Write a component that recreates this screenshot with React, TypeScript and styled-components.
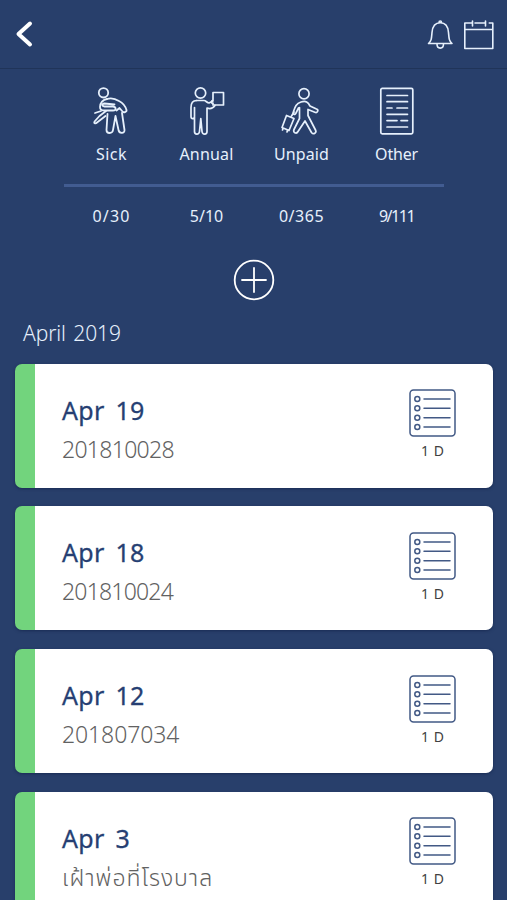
import React from "react";
import styled, { createGlobalStyle } from "styled-components";

const GlobalStyle = createGlobalStyle`
  * { box-sizing: border-box; }
  body { margin: 0; background: #283f6b; overflow: hidden; }
`;

const Screen = styled.main`
  width: 507px;
  height: 900px;
  overflow: hidden;
  background: #283f6b;
  color: #e6f0fc;
  font-family: "Noto Sans", "Noto Sans Thai", sans-serif;
`;

const Header = styled.header`
  display: flex;
  align-items: center;
  height: 69px;
  padding: 0 12px 0 14px;
  border-bottom: 1px solid #203459;
`;

const IconButton = styled.button<{ $push?: boolean }>`
  display: flex;
  padding: 0;
  border: 0;
  background: none;
  color: inherit;
  margin-right: ${(p) => (p.$push ? "auto" : "0")};
`;

const Line = styled.svg<{ $weight?: number }>`
  display: block;
  fill: none;
  stroke: currentColor;
  stroke-width: ${(p) => p.$weight ?? 1.6};
  stroke-linecap: round;
  stroke-linejoin: round;
`;

const Summary = styled.section`
  display: grid;
  grid-template-columns: repeat(4, 95px);
  width: 380px;
  height: 118px;
  margin: 0 auto 0 64px;
  padding-top: 17px;
  border-bottom: 3px solid #425c91;
`;

const LeaveType = styled.div`
  display: flex;
  flex-direction: column;
  align-items: center;
`;

const Label = styled.span<{ $spacing: number }>`
  margin-top: 6px;
  font-size: 16px;
  line-height: 24px;
  white-space: nowrap;
  letter-spacing: ${(p) => p.$spacing}px;
`;

const Totals = styled.section`
  display: grid;
  grid-template-columns: repeat(4, 95px);
  width: 380px;
  height: 69px;
  margin-left: 64px;
  padding-top: 17px;
`;

const Total = styled.span<{ $spacing: number }>`
  text-align: center;
  font-size: 16px;
  line-height: 24px;
  letter-spacing: ${(p) => p.$spacing}px;
`;

const AddRow = styled.div`
  display: flex;
  justify-content: center;
  height: 48px;
`;

const Month = styled.h2`
  margin: 0;
  height: 59.7px;
  padding: 14px 0 0 23px;
  font-size: 21px;
  font-weight: 300;
  line-height: 30px;
  letter-spacing: -0.1px;
  word-spacing: 2px;
`;

const Cards = styled.div`
  display: flex;
  flex-direction: column;
  gap: 18.7px;
  padding: 0 14px 0 15px;
`;

const Card = styled.article`
  display: flex;
  flex-shrink: 0;
  justify-content: space-between;
  height: 124px;
  padding: 0 37px 0 27px;
  border-left: 20px solid #72d47d;
  border-radius: 7px;
  background: #fff;
  box-shadow: 0 1px 3px rgba(15, 29, 65, 0.55);
`;

const Details = styled.div`
  padding-top: 29px;
`;

const DateText = styled.h3`
  margin: 0;
  color: #263f73;
  font-size: 25px;
  font-weight: 400;
  line-height: 34px;
  letter-spacing: 0.3px;
  white-space: nowrap;
  word-spacing: 4px;
  -webkit-text-stroke: 0.3px currentColor;
`;

const Note = styled.p<{ $spacing: number }>`
  margin: 5px 0 0;
  color: #626262;
  font-size: 23px;
  font-weight: 300;
  line-height: 34px;
  white-space: nowrap;
  letter-spacing: ${(p) => p.$spacing}px;
`;

const Duration = styled.div`
  display: flex;
  flex-direction: column;
  align-items: center;
  padding-top: 25.5px;
  color: #414141;
  font-size: 14px;
  line-height: 20px;
  word-spacing: 1px;
`;

const ListIcon = styled(Line)`
  color: #425985;
  margin-bottom: 4px;
`;

const SickIcon = () => (
  <Line width="50" height="50" viewBox="-7 0 50 50" $weight={1.8}>
    <circle cx="9.500" cy="6.800" r="4.700" />
    <path d="M13 13c-4 .5-7 4-7 8 0 2.500 1.500 3.500 4 3.500h9c3.500 0 3.500-3.500 0-4h-8.500c-2.500 0-3-2.500 0-3l10 1" />
    <path d="M13 13c4-1.500 8-.5 12 2 4 2 6.500 5.500 7.500 9 .5 2-3 3-4 1.500l-3-3.500-3 2.500" />
    <path d="M7 25 1 27M12 25l-6.500 5L1 35c-2 2.500.5 3 2 1.500l8.500-6.500" />
    <path d="M13.500 28 12.500 44c0 4 6 4 6.500 0l2.500-14 3 14c.7 4 6.500 3.500 6 0l-2.500-17" />
  </Line>
);

const AnnualIcon = () => (
  <Line width="50" height="50" viewBox="0 0 50 50" $weight={1.7}>
    <circle cx="18.500" cy="7" r="5.200" />
    <path d="M14.500 14.500c-4 0-5.500 3-5.500 7v9c0 2.800 3.500 2.800 3.500 0v-9M12.500 31v14.500c0 3.500 4.500 3.500 5 0l1.300-13 1.200 13c.5 3.500 5 3.500 5 0V22c4 1.500 6 .3 8-2.500" />
    <path d="M14.500 14.500h7.500c2 0 3 2.500 5 2.500l4-2" />
    <path d="M31 13.500V6.500h10.500V19H31v-2M31 14c-2 1-2 3 0 4" />
  </Line>
);

const UnpaidIcon = () => (
  <Line width="50" height="50" viewBox="-5 0 50 50" $weight={1.7}>
    <circle cx="22" cy="7.800" r="5.100" />
    <path d="M19 16c-5 1.500-6 5-7.500 9.500-1 3 1.500 4 2.500 1.500l2.500-5M19 16c5-1.500 7 0 9 4l6.500 3c2.500 1 1 4-1 3.500L26 23.500v6l7.500 14.500c1.500 3-2 5-4 2.500L23 35 16 45.500c-1.500 3-5.500 1-4-2l5.500-11V21.500" />
    <path d="m4.500 29.500 7.500 3-5 12-7-3zM9.500 30l2.500-4M1 42.500l-.5 1.500M5.500 44.500l-.5 1.500" />
  </Line>
);

const OtherIcon = () => (
  <Line width="50" height="50" viewBox="0 0 50 50" $weight={1.7}>
    <rect x="8.800" y="2.300" width="32" height="45.500" rx="1.500" />
    <path d="M15 9.500h20.500M15 15.700h20.500M15 22h5M25 22h10.500M15 28.300h20.500M15 34.600h10M29 34.600h6.500M15 41h20.500" />
  </Line>
);

const leaveTypes = [
  { label: "Sick", icon: <SickIcon />, spacing: 0.5 },
  { label: "Annual", icon: <AnnualIcon />, spacing: 0.2 },
  { label: "Unpaid", icon: <UnpaidIcon />, spacing: 0.1 },
  { label: "Other", icon: <OtherIcon />, spacing: -0.2 },
];

const totals = [
  { value: "0/30", spacing: 1.1 },
  { value: "5/10", spacing: 0 },
  { value: "0/365", spacing: 0.5 },
  { value: "9/111", spacing: -1.5 },
];

const entries = [
  { date: "Apr 19", note: "201810028", spacing: -0.7 },
  { date: "Apr 18", note: "201810024", spacing: -0.8 },
  { date: "Apr 12", note: "201807034", spacing: -0.1 },
  { date: "Apr 3", note: "เฝ้าพ่อที่โรงบาล", spacing: 1 },
];

export default function App() {
  return (
    <Screen>
      <GlobalStyle />
      <Header>
        <IconButton $push aria-label="Back">
          <Line width="22" height="30" viewBox="0 0 22 30" $weight={4} color="#fff">
            <path d="M16 4.500 4.500 15 16 25.500" />
          </Line>
        </IconButton>
        <IconButton aria-label="Notifications">
          <Line width="36" height="34" viewBox="4 0 36 34" $weight={1.6}>
            <path d="M6.500 26.500h23.500c-3-2.500-3-5-3.500-11C26 9.500 23 5.800 18.300 5.800S10.500 9.500 10 15.500c-.5 6-.5 8.500-3.500 11zM15 27c0 5.500 6.500 5.500 6.500 0M17 5.500c0-2 2.500-2 2.500 0" />
          </Line>
        </IconButton>
        <IconButton aria-label="Calendar">
          <Line width="33" height="34" viewBox="0 0 33 34" $weight={1.600}>
            <path d="M9.500 6H2.800v25.500h28V6h-3.500M13 6h9.500M2.800 12.500h28M10.500 4v5M23.500 4v5" />
          </Line>
        </IconButton>
      </Header>
      <Summary>
        {leaveTypes.map((t) => (
          <LeaveType key={t.label}>
            {t.icon}
            <Label $spacing={t.spacing}>{t.label}</Label>
          </LeaveType>
        ))}
      </Summary>
      <Totals>
        {totals.map((t) => (
          <Total key={t.value} $spacing={t.spacing}>{t.value}</Total>
        ))}
      </Totals>
      <AddRow>
        <IconButton aria-label="Add leave">
          <Line width="42" height="48" viewBox="0 0 42 48" $weight={1.800} color="#fff">
            <circle cx="21" cy="24" r="19.300" />
            <path d="M9 24h24M21 12v24" />
          </Line>
        </IconButton>
      </AddRow>
      <Month>April 2019</Month>
      <Cards>
        {entries.map((e) => (
          <Card key={e.date}>
            <Details>
              <DateText>{e.date}</DateText>
              <Note $spacing={e.spacing}>{e.note}</Note>
            </Details>
            <Duration>
              <ListIcon width="47" height="48" viewBox="0 0 47 48" $weight={1.500}>
                <rect x="1" y="1" width="45" height="46" rx="3.500" />
                {[10, 19.300, 28.700, 38].map((y) => (
                  <g key={y}>
                    <circle cx="8.300" cy={y} r="2.500" />
                    <path d={`M15 ${y}h26`} />
                  </g>
                ))}
              </ListIcon>
              1 D
            </Duration>
          </Card>
        ))}
      </Cards>
    </Screen>
  );
}
